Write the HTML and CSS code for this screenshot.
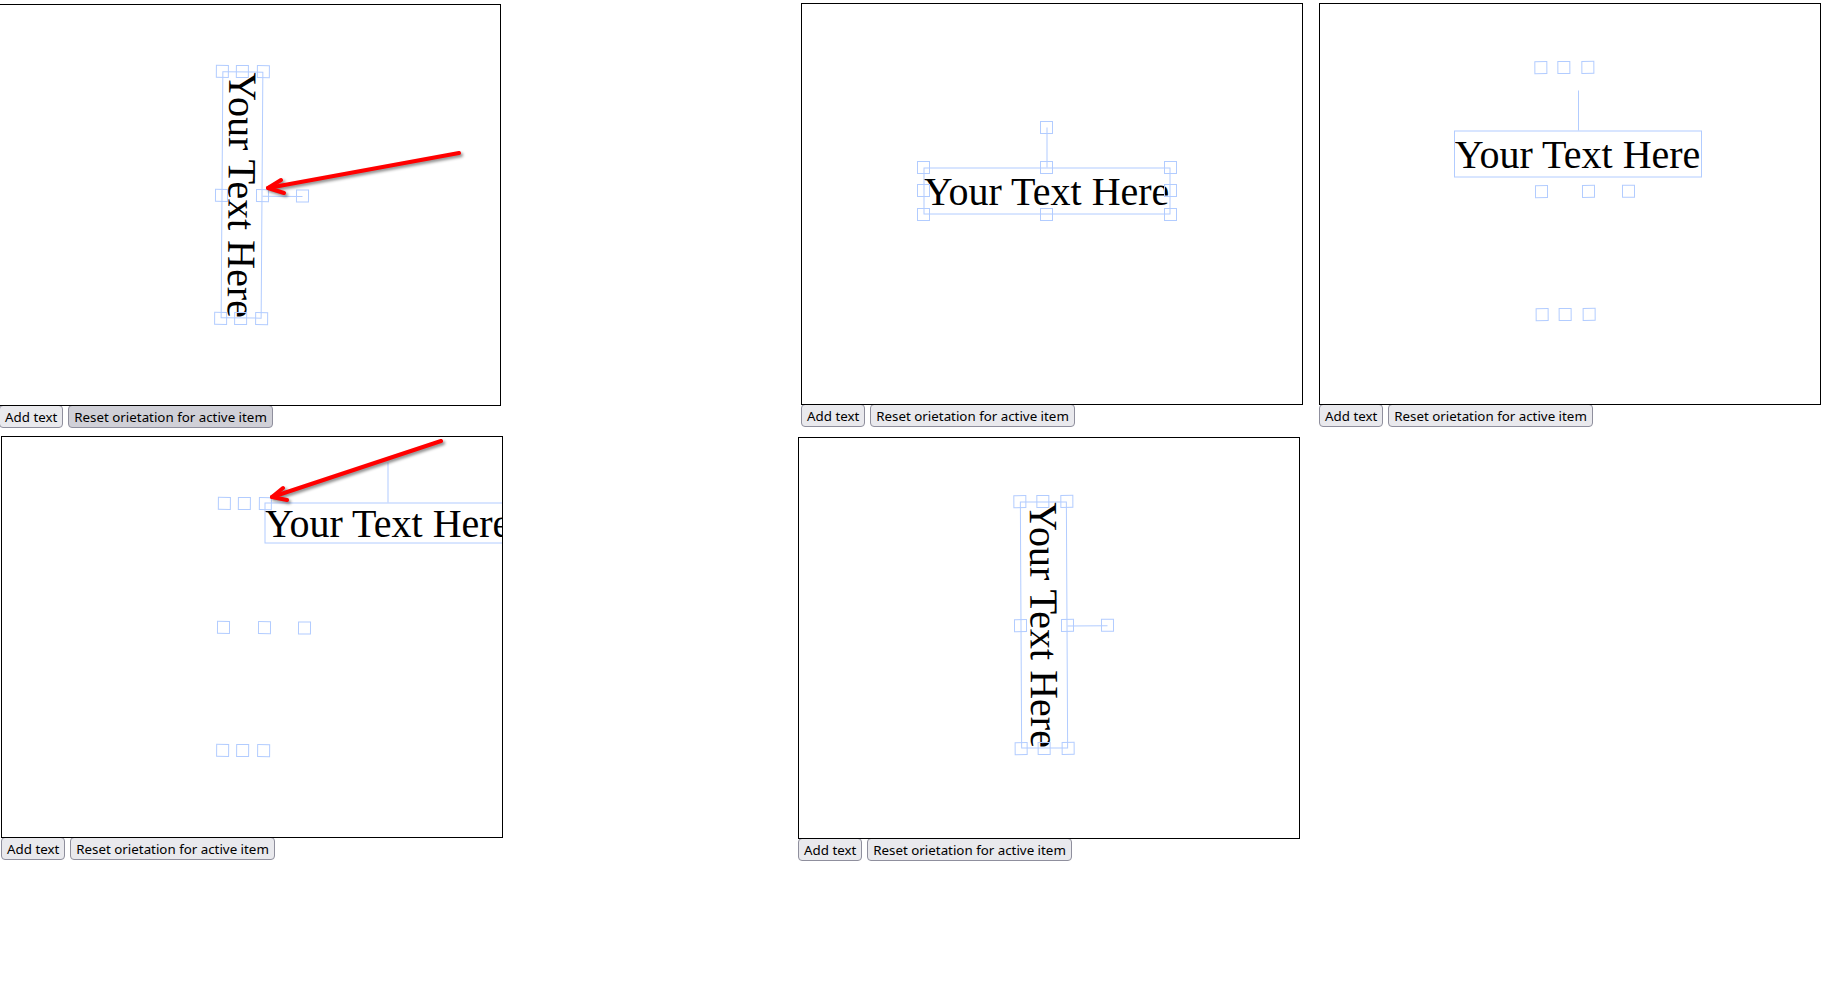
FILE: index.html
```html
<!DOCTYPE html>
<html lang="en">

<head>
    <meta charset="UTF-8">
    <title>Text orientation test</title>
    <link rel="stylesheet" href="styles.css">
</head>

<body>
    <div class="row row-top">
        <!-- 1: rotated text, reset button hovered -->
        <div class="cell cell-1">
            <div class="board">
                <div class="obj obj-1">
                    <div class="sel sel-thin tilt-cw">
                        <span class="label">Your Text Here</span>
                        <i class="stem"></i>
                        <i class="h tl"></i><i class="h tm"></i><i class="h tr"></i>
                        <i class="h ml"></i><i class="h mr"></i>
                        <i class="h bl"></i><i class="h bm"></i><i class="h br"></i>
                        <i class="h rot"></i>
                    </div>
                </div>
                <svg class="arrow" viewBox="0 0 500 400">
                    <path d="M459 148 L268 183" />
                    <path d="M281 175 L268 183 L284 188" />
                </svg>
            </div>
            <div class="tools">
                <button>Add text</button>
                <button class="is-hover">Reset orietation for active item</button>
            </div>
        </div>

        <!-- 2: after reset -->
        <div class="cell cell-2">
            <div class="board">
                <div class="obj obj-2">
                    <div class="sel">
                        <span class="label">Your Text Here</span>
                        <i class="stem"></i>
                        <i class="h tl"></i><i class="h tm"></i><i class="h tr"></i>
                        <i class="h ml"></i><i class="h mr"></i>
                        <i class="h bl"></i><i class="h bm"></i><i class="h br"></i>
                        <i class="h rot"></i>
                    </div>
                </div>
            </div>
            <div class="tools">
                <button>Add text</button>
                <button>Reset orietation for active item</button>
            </div>
        </div>

        <!-- 3: text reset, controls left behind -->
        <div class="cell cell-3">
            <div class="board">
                <div class="obj obj-3">
                    <div class="sel sel-wide">
                        <span class="label">Your Text Here</span>
                        <i class="stem"></i>
                    </div>
                </div>
                <div class="obj obj-3g">
                    <div class="sel ghost tilt-ccw">
                        <i class="h tl"></i><i class="h tm"></i><i class="h tr"></i>
                        <i class="h ml"></i><i class="h mr"></i>
                        <i class="h bl"></i><i class="h bm"></i><i class="h br"></i>
                        <i class="h rot"></i>
                    </div>
                </div>
            </div>
            <div class="tools">
                <button>Add text</button>
                <button>Reset orietation for active item</button>
            </div>
        </div>
    </div>

    <div class="row row-bottom">
        <!-- 4: text moved, controls left behind -->
        <div class="cell cell-4">
            <div class="board">
                <div class="obj obj-4">
                    <div class="sel sel-thin">
                        <span class="label">Your Text Here</span>
                        <i class="stem"></i>
                    </div>
                </div>
                <div class="obj obj-4g">
                    <div class="sel sel-thin ghost tilt-cw">
                        <i class="h tl"></i><i class="h tm"></i><i class="h tr"></i>
                        <i class="h ml"></i><i class="h mr"></i>
                        <i class="h bl"></i><i class="h bm"></i><i class="h br"></i>
                        <i class="h rot"></i>
                    </div>
                </div>
                <svg class="arrow" viewBox="0 0 500 400">
                    <path d="M439 4 L270 60" />
                    <path d="M281 51 L270 60 L285 63" />
                </svg>
            </div>
            <div class="tools">
                <button>Add text</button>
                <button>Reset orietation for active item</button>
            </div>
        </div>

        <!-- 5: rotated text -->
        <div class="cell cell-5">
            <div class="board">
                <div class="obj obj-5">
                    <div class="sel tilt-ccw">
                        <span class="label">Your Text Here</span>
                        <i class="stem"></i>
                        <i class="h tl"></i><i class="h tm"></i><i class="h tr"></i>
                        <i class="h ml"></i><i class="h mr"></i>
                        <i class="h bl"></i><i class="h bm"></i><i class="h br"></i>
                        <i class="h rot"></i>
                    </div>
                </div>
            </div>
            <div class="tools">
                <button>Add text</button>
                <button>Reset orietation for active item</button>
            </div>
        </div>
    </div>
</body>

</html>
```

FILE: styles.css
```css
:root {
    --sel-color: rgb(178, 204, 255);
    --button-bg: #e9e9ed;
    --button-hover: #d0d0d7;
    --button-border: #8f8f9d;
}

body {
    margin: 0;
    background: #ffffff;
}

.row {
    display: flex;
    align-items: flex-start;
}

.row-top {
    padding-top: 3px;
}

.row-bottom {
    margin-top: 8px;
}

/* each cell: canvas + buttons */
.cell-1 {
    margin-left: -1px;
    margin-top: 1px;
}

.cell-2 {
    margin-left: 300px;
}

.cell-3 {
    margin-left: 16px;
}

.cell-4 {
    margin-left: 1px;
}

.cell-5 {
    margin-left: 295px;
    margin-top: 1px;
}

.board {
    position: relative;
    width: 500px;
    height: 400px;
    border: 1px solid #000;
    overflow: hidden;
}

.tools {
    display: flex;
    gap: 5px;
    margin-top: -1px;
}

button {
    height: 23px;
    padding: 0 5px;
    font: 13.33px "Noto Sans", sans-serif;
    color: #000;
    background-color: var(--button-bg);
    border: 1px solid var(--button-border);
    border-radius: 4px;
    white-space: nowrap;
}

button:hover,
button.is-hover {
    background-color: var(--button-hover);
}

/* fabric-like objects */
.obj {
    position: absolute;
    width: 0;
    height: 0;
}

.obj-1 { left: 242px; top: 189.5px; }
.obj-2 { left: 244.5px; top: 186.8px; }
.obj-3 { left: 257.5px; top: 149.7px; }
.obj-3g { left: 244.5px; top: 186.7px; }
.obj-4 { left: 385.5px; top: 86.2px; }
.obj-4g { left: 241.5px; top: 190px; }
.obj-5 { left: 244.5px; top: 186.5px; }

.sel {
    position: absolute;
    left: 0;
    top: 0;
    width: 247px;
    height: 47px;
    transform: translate(-50%, -50%);
}

.sel::before {
    content: "";
    position: absolute;
    inset: 0;
    border: 1px solid var(--sel-color);
}

.sel-thin {
    height: 41px;
}

.sel-wide {
    width: 248px;
}

.tilt-cw {
    transform: translate(-50%, -50%) rotate(90.4deg);
}

.tilt-ccw {
    transform: translate(-50%, -50%) rotate(89.7deg);
}

.ghost::before {
    display: none;
}

.label {
    display: block;
    height: 100%;
    font: 40px/47px "Liberation Serif", serif;
    color: #000;
    text-align: center;
    white-space: nowrap;
}

.sel-thin .label {
    line-height: 41px;
}

.stem {
    position: absolute;
    left: 50%;
    top: -40px;
    width: 1px;
    height: 40px;
    background: var(--sel-color);
}

.h {
    position: absolute;
    width: 13px;
    height: 13px;
    box-sizing: border-box;
    border: 1px solid var(--sel-color);
    transform: translate(-50%, -50%);
}

.tl { left: 0; top: 0; }
.tm { left: 50%; top: 0; }
.tr { left: 100%; top: 0; }
.ml { left: 0; top: 50%; }
.mr { left: 100%; top: 50%; }
.bl { left: 0; top: 100%; }
.bm { left: 50%; top: 100%; }
.br { left: 100%; top: 100%; }
.rot { left: 50%; top: -40px; }

.arrow {
    position: absolute;
    inset: 0;
    width: 500px;
    height: 400px;
    fill: none;
    stroke: #ff0000;
    stroke-width: 4;
    stroke-linecap: round;
    stroke-linejoin: round;
    filter: drop-shadow(2px 2px 1.5px rgba(0, 0, 0, 0.45));
}
```
